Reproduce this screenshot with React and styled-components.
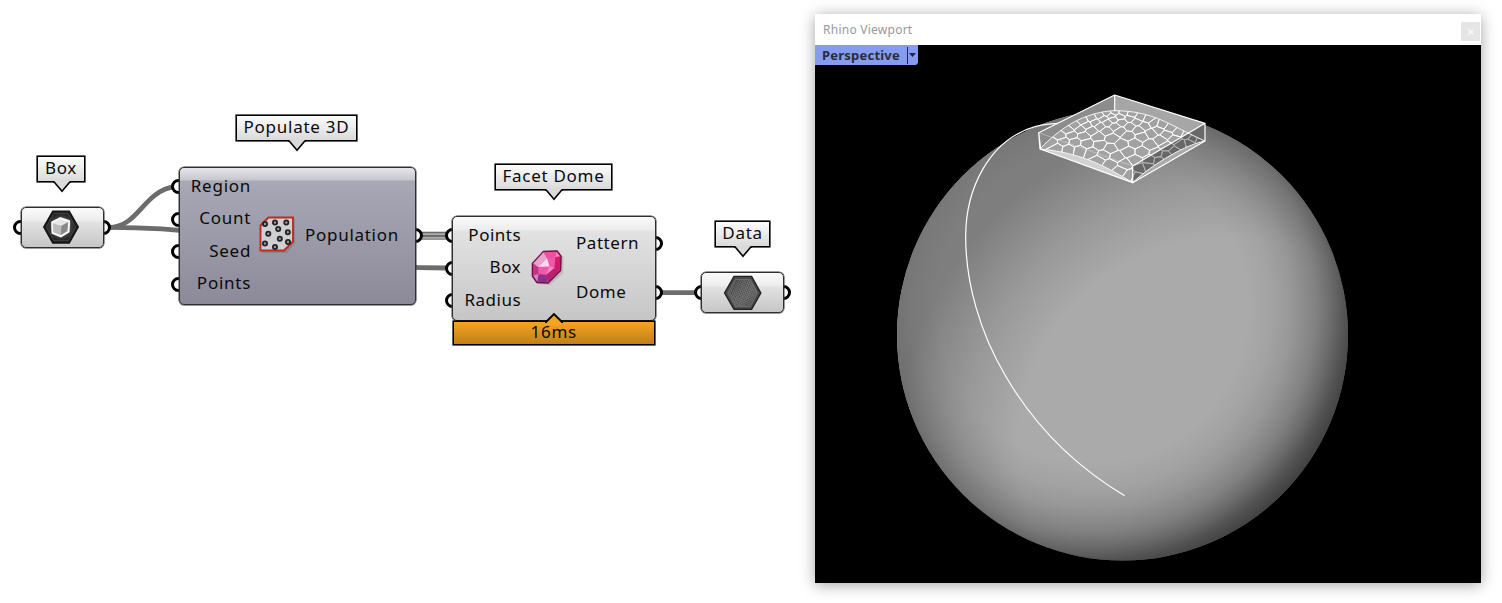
import React from 'react';
import styled, { createGlobalStyle, css } from 'styled-components';

const Global = createGlobalStyle`
  body { margin: 0; background: #fff; overflow: hidden; }
  * { box-sizing: border-box; }
`;

const Canvas = styled.main`
  position: relative;
  width: 1502px;
  height: 603px;
  background: #fff;
  font-family: 'Noto Sans', 'Open Sans', sans-serif;
  font-size: 17px;
  color: #0a0a0a;
`;

const WireLayer = styled.svg`
  position: absolute;
  inset: 0;
`;

const skins = {
  plain: css`
    background: linear-gradient(#fbfbfb 0, #ececec 13px, #e2e2e2 14px, #c6c6c6 100%);
  `,
  violet: css`
    background: linear-gradient(#e6e6ec 0, #c6c6ce 12px, #a9a8b6 13px, #8c8a98 100%);
  `,
};

const NodeFrame = styled.section`
  position: absolute;
  left: ${(p) => p.$x}px;
  top: ${(p) => p.$y}px;
  width: ${(p) => p.$w}px;
  height: ${(p) => p.$h}px;
`;

const NodeBody = styled.div`
  position: relative;
  display: flex;
  align-items: stretch;
  justify-content: ${(p) => (p.$center ? 'center' : 'flex-start')};
  height: 100%;
  border: 1px solid #2e2e2e;
  border-radius: 5px;
  box-shadow: 0 0 0 0.5px #3a3a3a;
  ${(p) => skins[p.$skin]}
`;

const GripColumn = styled.div`
  position: absolute;
  top: 0;
  bottom: 0;
  ${(p) => (p.$side === 'left' ? 'left: -7.4px;' : 'right: -7.4px;')}
  display: flex;
  flex-direction: column;
  justify-content: ${(p) => (p.$single ? 'center' : 'flex-start')};
  padding-top: ${(p) => p.$pad || 0}px;
  gap: ${(p) => p.$gap || 0}px;
`;

const Grip = styled.i`
  display: block;
  width: 15px;
  height: 15px;
  border: 3px solid #000;
  border-radius: 50%;
  background: #fff;
`;

const PortList = styled.div`
  display: flex;
  flex-direction: column;
  width: ${(p) => p.$w}px;
  padding-top: ${(p) => p.$pad}px;
  gap: ${(p) => p.$gap}px;
  text-align: ${(p) => p.$align || 'left'};
  letter-spacing: ${(p) => p.$ls ?? 0.5}px;
`;

const Port = styled.span`
  height: 24px;
  line-height: 24px;
  margin-right: -0.6px;
  white-space: nowrap;
`;

const IconSlot = styled.div`
  display: flex;
  align-items: center;
  justify-content: center;
  width: ${(p) => p.$w}px;
  padding-bottom: ${(p) => p.$lift || 0}px;
  padding-right: ${(p) => p.$shift || 0}px;
`;

const Callout = styled.div`
  position: absolute;
  left: ${(p) => p.$x + 1}px;
  top: ${(p) => p.$y + 1}px;
  width: ${(p) => p.$w - 2}px;
  height: 26px;
  border: 1px solid #000;
  box-shadow: 0 0 0 0.6px #000;
  background: linear-gradient(#fcfcfc, #dadada);
  display: flex;
  justify-content: center;
  line-height: 22px;
  letter-spacing: ${(p) => p.$ls ?? 0.7}px;
  white-space: nowrap;
`;

const Pointer = styled.svg`
  position: absolute;
  left: ${(p) => p.$at - 11}px;
  top: 23px;
`;

const Timer = styled.div`
  position: absolute;
  left: 452.5px;
  top: 321px;
  width: 202.5px;
  height: 24px;
  border: 1px solid #000;
  box-shadow: 0 0 0 0.6px #000;
  background: linear-gradient(#f4a423, #c08018);
  display: flex;
  justify-content: center;
  line-height: 20px;
  letter-spacing: 0.7px;
`;

const TimerPointer = styled.svg`
  position: absolute;
  left: 91.5px;
  top: -10.5px;
`;

const Window = styled.section`
  position: absolute;
  left: 815px;
  top: 14px;
  width: 666px;
  height: 569px;
  display: flex;
  flex-direction: column;
  box-shadow: 0 2px 14px rgba(0, 0, 0, 0.36);
`;

const TitleBar = styled.header`
  display: flex;
  justify-content: space-between;
  height: 31px;
  padding: 8px 1px 0 8px;
  background: #fff;
  color: #999;
  font-size: 12px;
  line-height: 16px;
  letter-spacing: 0.25px;
`;

const CloseButton = styled.div`
  display: flex;
  align-items: center;
  justify-content: center;
  width: 19px;
  height: 19px;
  background: #e5e5e5;
`;

const Scene = styled.div`
  position: relative;
  flex: 1;
  background: #000;
`;

const SceneArt = styled.svg`
  display: block;
`;

const ViewTab = styled.div`
  position: absolute;
  left: 0;
  top: 0;
  display: flex;
  align-items: center;
  width: 103px;
  height: 20px;
  padding-left: 7px;
  background: #869cf0;
  clip-path: polygon(0 0, 100% 0, 100% 18px, 101px 100%, 0 100%);
  color: #2a2c38;
  font-size: 13px;
  font-weight: 700;
  line-height: 20px;
  letter-spacing: 0.22px;
`;

const TabArrow = styled.svg`
  position: absolute;
  left: 91px;
  top: 0;
`;

/* ---- dome tessellation: each seed is the centre of one facet ---- */
const seeds = [
  284,82, 260,84, 310,83, 335,88, 240,92, 275,92, 300,95, 360,97, 330,100, 385,103, 215,100, 250,101,
  280,103, 350,110, 190,108, 225,112, 262,113, 305,112, 400,115, 375,122, 425,120, 165,122, 200,120,
  240,124, 285,125, 330,125, 355,135, 450,130, 415,135, 145,135, 180,133, 215,137, 260,138, 300,138,
  395,145, 440,148, 475,143, 325,152, 365,155, 120,152, 155,150, 190,153, 235,155, 275,160, 420,165,
  465,162, 500,150, 345,175, 390,178, 305,178, 95,172, 130,170, 165,172, 200,176, 240,180, 440,185,
  485,178, 520,160, 270,190, 365,200, 325,200, 410,205, 110,188, 145,192, 180,195, 215,202, 250,210,
  290,215, 345,225, 390,225, 440,210, 235,225, 270,238, 315,238, 360,250, 300,258, 330,270, 540,165,
  385,245, 350,275, 415,228, 462,200, 507,175,
].reduce((out, v, i, a) => (i % 2 ? out : [...out, [v, a[i + 1]]]), []);

function facet(seed) {
  let poly = [[40, 60], [580, 60], [580, 310], [40, 310]];
  for (const other of seeds) {
    if (other === seed) continue;
    /* distances are stretched vertically to follow the foreshortened surface */
    const k = 1.8;
    const nx = other[0] - seed[0];
    const ny = (other[1] - seed[1]) * k;
    const c = (other[0] ** 2 + k * other[1] ** 2 - seed[0] ** 2 - k * seed[1] ** 2) / 2;
    const next = [];
    poly.forEach((a, i) => {
      const b = poly[(i + 1) % poly.length];
      const da = a[0] * nx + a[1] * ny - c;
      const db = b[0] * nx + b[1] * ny - c;
      if (da <= 0) next.push(a);
      if (da * db < 0) {
        const t = da / (da - db);
        next.push([a[0] + (b[0] - a[0]) * t, a[1] + (b[1] - a[1]) * t]);
      }
    });
    poly = next;
  }
  return 'M' + poly.map((p) => p.map((n) => n.toFixed(1)).join(' ')).join('L') + 'Z';
}
const facets = seeds.map(facet).join('');

const arc =
  'M734 1247C588 1160 462 1035 375 885C301 760 257 610 257 470C257 330 325 180 465 140C515 127 560 127 620 130';

const domeOutline =
  'M60 192C95 155 140 118 190 98C225 84 260 77 284 77C350 77 400 92 450 117C490 137 525 155 555 168C500 178 400 235 338 293C270 252 190 203 60 192Z';

function SphereScene() {
  return (
    <SceneArt width="666" height="538" viewBox="815 45 666 538">
      <defs>
        <radialGradient id="limb" gradientUnits="userSpaceOnUse" cx="1092" cy="307" r="267">
          <stop offset="0.58" stopColor="#000" stopOpacity="0" />
          <stop offset="0.67" stopColor="#000" stopOpacity="0.04" />
          <stop offset="0.75" stopColor="#000" stopOpacity="0.11" />
          <stop offset="0.84" stopColor="#000" stopOpacity="0.24" />
          <stop offset="0.9" stopColor="#000" stopOpacity="0.38" />
          <stop offset="0.95" stopColor="#000" stopOpacity="0.52" />
          <stop offset="1" stopColor="#000" stopOpacity="0.62" />
        </radialGradient>
        <radialGradient id="shade" gradientUnits="userSpaceOnUse" cx="1230" cy="450" r="332">
          <stop offset="0.64" stopColor="#7e7e7e" stopOpacity="0" />
          <stop offset="0.8" stopColor="#7e7e7e" stopOpacity="0.38" />
          <stop offset="1" stopColor="#7e7e7e" />
        </radialGradient>
        <clipPath id="dome"><path d={domeOutline} /></clipPath>
      </defs>
      <circle cx="1122.5" cy="335" r="225.5" fill="#aaa" />
      <circle cx="1122.5" cy="335" r="225.5" fill="url(#shade)" />
      <circle cx="1122.5" cy="335" r="225.5" fill="url(#limb)" />
      <g transform="translate(880 80) scale(.33333)">
        <path d={arc} fill="none" stroke="#fff" strokeWidth="3.6" />
      </g>
      <g transform="translate(1020 85) scale(.33333)">
        <path d="M56 143L284 30V77L60 192Z" fill="#8c8c8c" />
        <path d="M284 30L555 115V168L284 77Z" fill="#a6a6a6" />
        <path d="M60 192L284 77L555 168L338 293Z" fill="#b0b0b0" />
        <path d={domeOutline} fill="#a2a2a2" />
        <path d="M60 192C190 203 270 252 338 293Z" fill="#d2d2d2" />
        <path d="M338 243L555 115V168L338 293Z" fill="#555" fillOpacity="0.75" />
        <path d="M338 293C400 235 500 178 555 168Z" fill="#aaa" />
        <g clipPath="url(#dome)">
          <path d={facets} fill="none" stroke="#fff" strokeWidth="2.7" />
          <path d="M338 243L555 115V168L338 293Z" fill="#666" fillOpacity="0.5" />
        </g>
        <path d={domeOutline} fill="none" stroke="#f4f4f4" strokeWidth="3" />
        <path
          d="M56 143L284 30L555 115V168L338 293L60 192ZM284 30V77M338 243V293M338 243L555 115M56 143L62 192"
          fill="none"
          stroke="#fff"
          strokeWidth="3.6"
          strokeLinejoin="round"
        />
        <path d="M56 143L338 243" stroke="#fff" strokeWidth="2" strokeOpacity="0.5" />
      </g>
    </SceneArt>
  );
}

function Label({ at, children, ...rest }) {
  return (
    <Callout {...rest}>
      {children}
      <Pointer $at={at} width="18" height="14" viewBox="0 0 18 14">
        <path d="M1 0V2L9 11.5L17 2V0Z" fill="#dadada" />
        <path d="M0 2H1.2L9 11.3L16.8 2H18" fill="none" stroke="#000" strokeWidth="1.6" />
      </Pointer>
    </Callout>
  );
}

function BoxIcon() {
  return (
    <svg width="40" height="36" viewBox="0 0 40 36">
      <defs>
        <radialGradient id="boxhex"><stop offset="0" stopColor="#777" /><stop offset="0.6" stopColor="#484848" /><stop offset="1" stopColor="#222" /></radialGradient>
      </defs>
      <path d="M11.3 1.2H28.7L38.2 18L28.7 34.8H11.3L1.8 18Z" fill="#1c1c1c" stroke="#151515" strokeWidth="1.4" />
      <path d="M12.5 3.6H27.5L35.4 18L27.5 32.4H12.5L4.6 18Z" fill="url(#boxhex)" stroke="#505050" strokeWidth="0.8" />
      <path d="M11 13.2L19.5 9L28.3 12L27.6 22.8L19.7 27.6L11.4 24.2Z" fill="#f6f6f6" stroke="#f6f6f6" strokeWidth="2.8" strokeLinejoin="round" />
      <path d="M11.6 14L19.5 10.2L27.5 12.8L20.3 16.8Z" fill="#e6e6e6" />
      <path d="M11.6 14L20.3 16.8L19.8 26.6L11.9 23.6Z" fill="#bcbcbc" />
      <path d="M20.3 16.8L27.6 12.8L26.8 22.2L19.8 26.6Z" fill="#888" />
    </svg>
  );
}

function DataIcon() {
  return (
    <svg width="40" height="36" viewBox="0 0 40 36">
      <defs>
        <pattern id="mesh" width="2.8" height="2.8" patternUnits="userSpaceOnUse" patternTransform="rotate(20)">
          <rect width="2.8" height="2.8" fill="#808080" />
          <path d="M0 0H1.4V1.4H0ZM1.4 1.4H2.8V2.8H1.4Z" fill="#3c3c3c" />
        </pattern>
        <linearGradient id="meshShade" x1="0" y1="0" x2="1" y2="1">
          <stop offset="0" stopColor="#000" stopOpacity="0.3" />
          <stop offset="0.6" stopColor="#aaa" stopOpacity="0.12" />
          <stop offset="1" stopColor="#000" stopOpacity="0.3" />
        </linearGradient>
      </defs>
      <path d="M11 1.4H28.6L37.8 18L28.6 34.4H11L1.6 18Z" fill="#484848" stroke="#222" strokeWidth="1.4" />
      <path d="M12.4 4.4H27.2L34.4 18L27.2 31.6H12.4L5 18Z" fill="url(#mesh)" />
      <path d="M12.4 4.4H27.2L34.4 18L27.2 31.6H12.4L5 18Z" fill="url(#meshShade)" stroke="#777" strokeWidth="0.8" />
    </svg>
  );
}

function PopulateIcon() {
  const dots = [[6, 8], [16, 6.5], [27.3, 6.5], [19.2, 13], [9.3, 17.8], [28.8, 16.3], [20.8, 22.8], [6, 27.5], [29, 26], [16, 31]];
  return (
    <svg width="38" height="38" viewBox="0 0 38 38">
      <path d="M3 11.5L11.5 3H36V27L28 37H3Z" fill="#555" opacity="0.25" />
      <path d="M1.5 9.5L9.5 1.5H34V25.5L25 34.5H1.5Z" fill="#d0d0d3" stroke="#c32a1e" strokeWidth="1.9" />
      {dots.map(([x, y]) => (
        <circle key={`${x}-${y}`} cx={x} cy={y} r="2.1" fill="#999" stroke="#222" strokeWidth="1.8" />
      ))}
    </svg>
  );
}

function GemIcon() {
  return (
    <svg width="36" height="38" viewBox="0 0 36 38">
      <path d="M14 3.5L29 3L33.5 8L33 24L20 36L7 35L3 20Z" fill="#555" opacity="0.2" />
      <path d="M13.5 2.5L27 2L31 7.5L30.5 21.5L18 34L7 33.5L2.5 27V14.5Z" fill="#e0409a" stroke="#741048" strokeWidth="1.6" strokeLinejoin="round" />
      <path d="M13.5 3.2L17 9L8 18L3.2 14.5Z" fill="#e9a3cd" />
      <path d="M13.5 3.2L26.5 2.7L25.5 8L17 9Z" fill="#f0509d" />
      <path d="M26.5 2.7L30.2 7.6L25.5 8Z" fill="#ff8cc3" />
      <path d="M17 9L25.5 8L24.5 19L16 26L8.5 25L8 18Z" fill="#ee5aa8" />
      <path d="M17 9L19.5 17.5L8 18Z" fill="#fbd8ee" />
      <path d="M19.5 17.5L24.5 19L16 26Z" fill="#f78ac6" />
      <path d="M25.5 8L30.2 7.6L29.8 21L24.5 19Z" fill="#d41a68" />
      <path d="M24.5 19L29.8 21L18 33.2L16 26Z" fill="#b82070" />
      <path d="M16 26L18 33.2L7.3 32.8L8.5 25Z" fill="#8f2f8c" />
      <path d="M3.2 14.5L8 18L8.5 25L3.2 26.5Z" fill="#c23486" />
      <path d="M3.2 26.5L8.5 25L7.3 32.8Z" fill="#d880c4" />
    </svg>
  );
}

export default function App() {
  return (
    <>
      <Global />
      <Canvas>
        <WireLayer width="800" height="400" fill="none">
          <g stroke="#6c6c6c" strokeWidth="4.8">
            <path d="M109 227.3C139 227.3 143 191 175 186.7" />
            <path d="M109 227.3C276 227.3 279 268 447 268" />
            <path d="M660 292.7H696" />
          </g>
          <path d="M420 235.7H448" stroke="#6c6c6c" strokeWidth="8" />
          <path d="M420 234.2H448M420 237.8H448" stroke="#c4c4c4" strokeWidth="1.2" />
        </WireLayer>

        <Label $x={36} $y={155} $w={50} $ls={0.6} at={26}>Box</Label>
        <NodeFrame $x={20.5} $y={207} $w={83} $h={40.5}>
          <GripColumn $side="left" $single><Grip /></GripColumn>
          <GripColumn $side="right" $single><Grip /></GripColumn>
          <NodeBody $skin="plain" $center>
            <IconSlot $w={40} $shift={2}><BoxIcon /></IconSlot>
          </NodeBody>
        </NodeFrame>

        <Label $x={235} $y={114} $w={123} $ls={0.75} at={62}>Populate 3D</Label>
        <NodeFrame $x={178.5} $y={166.5} $w={237.5} $h={138}>
          <GripColumn $side="left" $pad={12.7} $gap={17.6}><Grip /><Grip /><Grip /><Grip /></GripColumn>
          <GripColumn $side="right" $single><Grip /></GripColumn>
          <NodeBody $skin="violet">
            <PortList $w={71} $pad={6.3} $gap={8.5} $ls={0.75} $align="right">
              <Port>Region</Port><Port>Count</Port><Port>Seed</Port><Port>Points</Port>
            </PortList>
            <IconSlot $w={54.6} $lift={2}><PopulateIcon /></IconSlot>
            <PortList $w={100} $pad={55} $gap={0} $ls={0.7}><Port>Population</Port></PortList>
          </NodeBody>
        </NodeFrame>

        <Label $x={494} $y={163} $w={119} $ls={0.7} at={60}>Facet Dome</Label>
        <NodeFrame $x={452} $y={215.5} $w={203.5} $h={105}>
          <GripColumn $side="left" $pad={12.7} $gap={17.5}><Grip /><Grip /><Grip /></GripColumn>
          <GripColumn $side="right" $pad={20.7} $gap={34}><Grip /><Grip /></GripColumn>
          <NodeBody $skin="plain">
            <PortList $w={67.5} $pad={6.3} $gap={8.5} $align="right">
              <Port>Points</Port><Port>Box</Port><Port>Radius</Port>
            </PortList>
            <IconSlot $w={55.5}><GemIcon /></IconSlot>
            <PortList $w={70} $pad={14.5} $gap={25} $ls={0.55}><Port>Pattern</Port><Port>Dome</Port></PortList>
          </NodeBody>
        </NodeFrame>
        <Timer>
          16ms
          <TimerPointer width="18" height="13" viewBox="0 0 18 13">
            <path d="M1 13V10L9 2L17 10V13Z" fill="#f4a423" />
            <path d="M0 10H1L9 2L17 10H18" fill="none" stroke="#000" strokeWidth="1.8" />
          </TimerPointer>
        </Timer>

        <Label $x={714} $y={220} $w={57} $ls={0.7} at={29}>Data</Label>
        <NodeFrame $x={701} $y={272} $w={83} $h={41}>
          <GripColumn $side="left" $single><Grip /></GripColumn>
          <GripColumn $side="right" $single><Grip /></GripColumn>
          <NodeBody $skin="plain" $center>
            <IconSlot $w={40}><DataIcon /></IconSlot>
          </NodeBody>
        </NodeFrame>

        <Window>
          <TitleBar>
            Rhino Viewport
            <CloseButton>
              <svg width="6" height="6" viewBox="0 0 6 6">
                <path d="M.5 .5L5.5 5.5M5.5 .5L.5 5.5" stroke="#f5f5f5" strokeWidth="1.6" />
              </svg>
            </CloseButton>
          </TitleBar>
          <Scene>
            <SphereScene />
            <ViewTab>
              Perspective
              <TabArrow width="12" height="20" viewBox="0 0 12 20">
                <path d="M1.5 2V19" stroke="#24283a" strokeWidth="1" />
                <path d="M3 8H10L6.5 12Z" fill="#24283a" />
              </TabArrow>
            </ViewTab>
          </Scene>
        </Window>
      </Canvas>
    </>
  );
}
